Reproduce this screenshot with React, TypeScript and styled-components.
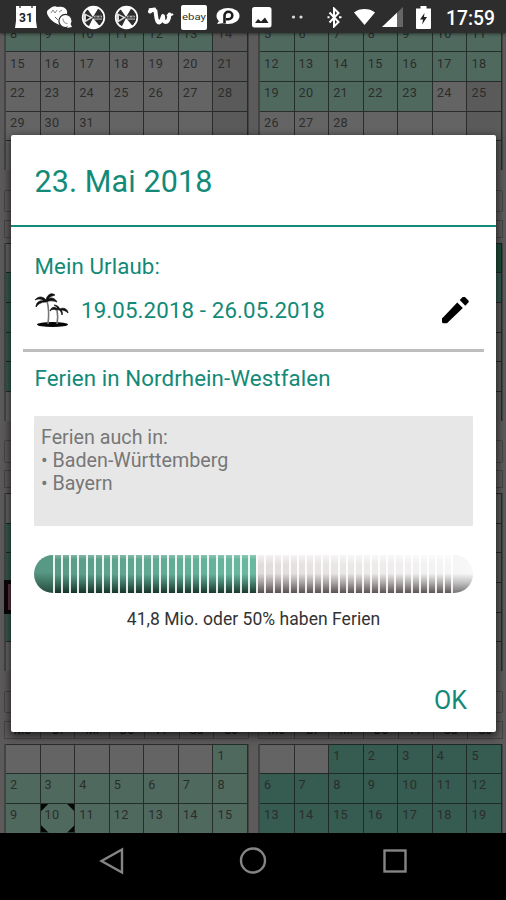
import React from 'react';
import styled, { createGlobalStyle, css } from 'styled-components';

const Global = createGlobalStyle`
  * { box-sizing: border-box; }
  body { margin: 0; background: #000; font-family: Roboto, "Liberation Sans", sans-serif; }
`;

const Screen = styled.div`
  position: relative;
  width: 506px;
  height: 900px;
  display: flex;
  flex-direction: column;
  overflow: hidden;
  background: #5c5a5b;
`;

const StatusBar = styled.header`
  flex: none;
  height: 33px;
  padding: 0 11px 0 9px;
  display: flex;
  align-items: center;
  background: #2d2d2d;
  box-shadow: 0 1px 3px rgba(0, 0, 0, 0.5);
  z-index: 1;
`;

const StatusIcon = styled.span<{ $w: number }>`
  flex: none;
  width: ${(p) => p.$w}px;
  display: flex;
  justify-content: center;
  padding-top: 1px;
  svg { display: block; }
`;

const Clock = styled.time`
  margin-left: auto;
  color: #fff;
  font-size: 19.3px;
  font-weight: 500;
  line-height: 33px;
  padding-top: 3px;
`;

const Calendar = styled.main`
  flex: 1;
  min-height: 0;
  overflow: hidden;
  display: flex;
  gap: 9px;
  padding: 0 4px;
`;

const MonthColumn = styled.div`
  width: 245px;
  flex: none;
  margin-top: -11.3px;
`;

const Month = styled.section`
  padding-bottom: 19.4px;
`;

const MonthTitle = styled.div`
  height: 22.5px;
  margin-bottom: 7.7px;
  border: 1px solid #454545;
  border-radius: 2px;
  text-align: center;
  font-size: 14px;
  line-height: 20px;
  color: #222;
`;

const DayRow = styled.div`
  display: grid;
  grid-template-columns: repeat(7, 1fr);
`;

const Weekdays = styled(DayRow)`
  height: 17.8px;
  margin-bottom: 5px;
  border: 1px solid #454545;
  font-size: 12px;
  line-height: 17px;
  text-align: center;
  color: #151515;
  span + span { border-left: 1px solid #3a3a3a; }
`;

const Days = styled(DayRow)`
  grid-auto-rows: 29.7px;
  border: solid #444;
  border-width: 0 1px 0 2px;
`;

type Tone = 'plain' | 'sunday' | 'light' | 'dark' | 'vivid' | 'selected';
const toneColor: Record<Tone, string> = {
  plain: '#656464',
  sunday: '#5b5a5a',
  light: '#50695f',
  dark: '#365b50',
  vivid: '#1f4d3a',
  selected: '#5e3347',
};

const corner = (x: string, y: string, angle: number) =>
  `linear-gradient(${angle}deg, #060808 4.8px, transparent 5.6px) ${x} ${y} / 50% 50% no-repeat`;

const Day = styled.div<{ $tone: Tone; $today?: boolean }>`
  background: ${(p) => toneColor[p.$tone]};
  border-top: 1px solid rgba(20, 24, 22, 0.72);
  border-right: 1px solid rgba(20, 24, 22, 0.72);
  padding: 3.2px 0 0 4px;
  font-size: 12.7px;
  line-height: 15px;
  letter-spacing: 0.35px;
  color: #2b2d2c;
  ${(p) =>
    p.$today &&
    css`
      background: ${corner('0', '0', 135)}, ${corner('100%', '0', 225)}, ${corner('0', '100%', 45)},
        ${corner('100%', '100%', 315)}, ${toneColor.light};
    `}
  ${(p) => p.$tone === 'selected' && 'outline: 4px solid #0b0708; outline-offset: -2px; z-index: 1;'}
`;

interface MonthData {
  name: string;
  offset: number;
  length: number;
  tone: (day: number, column: number) => Tone | null;
  today?: number;
  /** First and last (exclusive) week inside the scrolled viewport. */
  weeks?: [number, number];
}

const between = (d: number, a: number, b: number) => d >= a && d <= b;

const leftMonths: MonthData[] = [
  { name: 'Januar', offset: 0, length: 31, weeks: [1, 6], tone: (d) => (between(d, 1, 13) ? 'light' : null) },
  { name: 'März', offset: 3, length: 31, tone: (d) => (between(d, 4, 31) ? 'dark' : null) },
  {
    name: 'Mai', offset: 1, length: 31,
    tone: (d) => (d === 21 ? 'selected' : between(d, 7, 28) ? 'dark' : null),
  },
  { name: 'Juli', offset: 6, length: 31, today: 10, weeks: [0, 3], tone: () => 'light' },
];

const rightMonths: MonthData[] = [
  { name: 'Februar', offset: 3, length: 28, weeks: [1, 6], tone: (d) => (between(d, 5, 23) ? 'light' : null) },
  { name: 'April', offset: 6, length: 30, tone: (d) => (d === 1 ? 'vivid' : between(d, 2, 8) ? 'dark' : null) },
  { name: 'Juni', offset: 4, length: 30, tone: () => null },
  { name: 'August', offset: 2, length: 31, weeks: [0, 3], tone: () => 'dark' },
];

function MonthView({ data }: { data: MonthData }) {
  const [from, to] = data.weeks ?? [0, 6];
  return (
    <Month>
      {from === 0 && (
        <>
          <MonthTitle>{data.name}</MonthTitle>
          <Weekdays>
            {['Mo', 'Di', 'Mi', 'Do', 'Fr', 'Sa', 'So'].map((d) => <span key={d}>{d}</span>)}
          </Weekdays>
        </>
      )}
      <Days>
        {Array.from({ length: (to - from) * 7 }, (_, i) => {
          const day = i + from * 7 - data.offset + 1;
          const valid = day > 0 && day <= data.length;
          const tone = (valid && data.tone(day, i % 7)) || (i % 7 === 6 ? 'sunday' : 'plain');
          return <Day key={i} $tone={tone} $today={data.today === day}>{valid ? day : ''}</Day>;
        })}
      </Days>
    </Month>
  );
}

const NavBar = styled.nav`
  flex: none;
  height: 67px;
  background: #000;
  display: flex;
  justify-content: space-between;
  padding: 13px 98px 0;
`;

const Dialog = styled.div`
  position: absolute;
  left: 11px;
  top: 135px;
  width: 485px;
  height: 597px;
  background: #fff;
  border-radius: 2px;
  box-shadow: 0 3px 8px 1px rgba(0, 0, 0, 0.65);
  color: #128a77;
  display: flex;
  flex-direction: column;
  z-index: 2;
`;

const DialogTitle = styled.h1`
  margin: 0;
  height: 92px;
  flex: none;
  border-bottom: 2px solid #168877;
  padding: 28px 24px 0 23.5px;
  font-size: 30.5px;
  line-height: 38px;
  font-weight: 400;
  letter-spacing: 0.12px;
`;

const SectionTitle = styled.h2<{ $top: number }>`
  margin: ${(p) => p.$top}px 24px 0 23.5px;
  font-size: 22.3px;
  line-height: 28px;
  font-weight: 400;
  letter-spacing: 0.09px;
`;

const HolidayRow = styled.div`
  display: flex;
  align-items: center;
  height: 40px;
  margin: 10px 27px 0 23px;
`;

const HolidayRange = styled.span`
  margin-left: 12px;
  flex: 1;
  font-size: 22.3px;
  letter-spacing: 0.12px;
`;

const Divider = styled.hr`
  width: 461px;
  height: 3px;
  margin: 19px 0 0 12px;
  border: 0;
  background: #bdbdbd;
`;

const RegionBox = styled.div`
  flex: none;
  width: 439px;
  height: 110px;
  margin: 24px 0 0 23px;
  padding: 11px 7px;
  border-radius: 1px;
  background: #e7e7e7;
  color: #777;
  font-size: 19.7px;
  line-height: 22.8px;
`;

const Gauge = styled.div`
  flex: none;
  width: 439px;
  height: 38px;
  margin: 29px 0 0 23px;
  border-radius: 19px;
  background:
    repeating-linear-gradient(90deg, rgba(255, 255, 255, 0.88) 0 2px, transparent 2px 8.13px) 19.3px 0 / 400.4px 100% no-repeat,
    linear-gradient(180deg, rgba(255, 255, 255, 0.25), transparent 12%, transparent 50%, rgba(5, 35, 25, 0.35) 72%, rgba(5, 25, 15, 0.8)) 20px 0 / 202px 100% no-repeat,
    linear-gradient(180deg, transparent 45%, rgba(5, 25, 15, 0.6)) 0 0 / 20px 100% no-repeat,
    linear-gradient(180deg, rgba(255, 255, 255, 0.65), transparent 25%, transparent 48%, rgba(60, 50, 50, 0.35) 72%, rgba(45, 35, 35, 0.76)) 222px 0 / 197px 100% no-repeat,
    linear-gradient(180deg, transparent 48%, rgba(80, 76, 76, 0.3) 72%, rgba(75, 72, 72, 0.75)) 419px 0 / 20px 100% no-repeat,
    linear-gradient(90deg, #579783, #69b9a0 222px, #e0dbda 222px, #f8f8f8);
`;

const GaugeLabel = styled.p`
  margin: 14px 0 0;
  text-align: center;
  color: #333;
  font-size: 17.5px;
  line-height: 24px;
  letter-spacing: 0.04px;
`;

const Actions = styled.footer`
  margin-top: auto;
  display: flex;
  justify-content: flex-end;
  padding: 0 29px 15.5px;
`;

const OkButton = styled.button`
  border: 0;
  padding: 0;
  background: none;
  color: #128a77;
  font: 400 25px/32px Roboto, sans-serif;
`;

const SmileyDisc = () => (
  <svg width="25" height="25" viewBox="0 0 25 25">
    <circle cx="12.5" cy="12.5" r="10.8" fill="#2d2d2d" stroke="#fff" strokeWidth="1.7" />
    <path d="M12 12 6 3.5A11 11 0 0 1 17.5 3ZM12 13 19 21.5A11 11 0 0 1 7.5 22Z" fill="#fff" />
    <path d="M2 7.5 12 12.5 3 18Z" fill="#ddd" />
    <path d="M5 10.5 9 12.5 5 15Z" fill="#222" />
    <path d="M13 10.7h8v4h-8z" fill="#aaa" />
    <path d="M14 14v-2h2v2M18 14v-2h2v2" stroke="#333" fill="none" />
  </svg>
);

const StatusIcons = () => (
  <>
    <StatusIcon $w={33.7}>
      <svg width="22" height="24" viewBox="0 0 22 24">
        <path d="M1 1h20v15l1 7H0l1-7Z" fill="#fff" />
        <path d="M5 1v2M17 1v2" stroke="#777" strokeWidth="2" />
        <text x="11" y="17" textAnchor="middle" fontSize="12" fontWeight="700" fontFamily="Roboto" fill="#222">31</text>
      </svg>
    </StatusIcon>
    <StatusIcon $w={33.7}>
      <svg width="26" height="23" viewBox="0 0 26 23">
        <path d="M5 1c2-1 4-1 5 0 4-1 9 0 10 4 1 5-3 8-7 11l1 3C5 18-3 7 1 4Z" fill="#fff" />
        <path d="m4 7 2-3 2 3 2-3M12 6l3-2" stroke="#888" fill="none" strokeWidth="1" />
        <path d="m8 11 3 3" stroke="#666" fill="none" strokeWidth="1" />
        <circle cx="18.5" cy="15" r="6.6" fill="#fff" stroke="#2d2d2d" strokeWidth="1.2" />
        <path d="M20 22l5-1-2-4" fill="#fff" />
        <path d="M16 12.5c0 3 2 5 4.5 5" stroke="#999" fill="none" strokeWidth="1.1" />
      </svg>
    </StatusIcon>
    <StatusIcon $w={33.7}><SmileyDisc /></StatusIcon>
    <StatusIcon $w={33.7}><SmileyDisc /></StatusIcon>
    <StatusIcon $w={33.7}>
      <svg width="26" height="20" viewBox="0 0 26 20">
        <path d="M2 4.5c2-2 4-2 5.5-.5.5 4 .5 7 2 10.5 2 3 4-1 5.5-5.5.5 3 0 6 2.5 6 2 0 3.5-2.5 4-7.5" fill="none" stroke="#fff" strokeWidth="3.9" strokeLinecap="round" strokeLinejoin="round" />
        <path d="M1.5 2.2 7 1.5M19.5 8.5l5-1" stroke="#fff" strokeWidth="1.8" strokeLinecap="round" />
      </svg>
    </StatusIcon>
    <StatusIcon $w={33.7}>
      <svg width="26" height="27" viewBox="0 0 26 27">
        <rect y="1" width="26" height="25" rx="2" fill="#fff" />
        <text x="13" y="15.5" textAnchor="middle" fontSize="9.5" textLength="24" lengthAdjust="spacingAndGlyphs" fontFamily="Roboto" fill="#333">ebay</text>
      </svg>
    </StatusIcon>
    <StatusIcon $w={33.7}>
      <svg width="24" height="20" viewBox="0 0 24 20">
        <ellipse cx="12" cy="9" rx="11.5" ry="8" fill="#fff" />
        <path d="M3 14 1 17l7-1" fill="#fff" />
        <path d="M8.5 16.5V8.5a3.9 3.7 0 1 1 3.9 3.7H10" fill="none" stroke="#1d1d1d" strokeWidth="2.6" />
      </svg>
    </StatusIcon>
    <StatusIcon $w={33.7}>
      <svg width="20" height="21" viewBox="0 0 20 21">
        <rect width="19.5" height="20.5" rx="2.5" fill="#fff" />
        <path d="m3 16 3-4 3 2.5 4-4 3.5 5.5Z" fill="#222" />
      </svg>
    </StatusIcon>
    <StatusIcon $w={37}>
      <svg width="13" height="4" viewBox="0 0 13 4">
        <circle cx="2.5" cy="2" r="1.6" fill="#ddd" /><circle cx="10" cy="2" r="1.6" fill="#ddd" />
      </svg>
    </StatusIcon>
    <StatusIcon $w={38}>
      <svg width="15" height="21" viewBox="0 0 15 21">
        <path d="m2.5 5.5 9 9.5-4.5 4.5v-18L11.5 6l-9 9.5" fill="none" stroke="#fff" strokeWidth="2" />
        <path d="M.5 10.3h2M12 10.3h2.5" stroke="#fff" strokeWidth="2" />
      </svg>
    </StatusIcon>
    <StatusIcon $w={21}>
      <svg width="26" height="20" viewBox="0 0 26 20">
        <path d="M13 20 0 4.3C7-1.4 19-1.4 26 4.3Z" fill="#fff" />
      </svg>
    </StatusIcon>
    <StatusIcon $w={35}>
      <svg width="21" height="20" viewBox="0 0 21 20">
        <path d="M0 20 21 0v20Z" fill="#666" /><path d="M0 20 15 5.7V20Z" fill="#fff" />
      </svg>
    </StatusIcon>
    <StatusIcon $w={28}>
      <svg width="15" height="23" viewBox="0 0 15 23">
        <path d="M4.5 0h6v2.5H15V22q0 1-1 1H1q-1 0-1-1V2.5h4.5Z" fill="#fff" />
        <path d="m8.5 7-4.5 6.5h3L6.2 18.5l4.8-7.5H8Z" fill="#222" />
      </svg>
    </StatusIcon>
  </>
);

const PalmIcon = () => (
  <svg width="35" height="36" viewBox="0 0 35 36">
    <ellipse cx="18.5" cy="32.5" rx="15.5" ry="2.5" fill="#050505" />
    <path d="M13 9c2 7 2 15 1 23M23 18c1 5 1 9 0 14" fill="none" stroke="#777" strokeWidth="1.6" />
    <path d="M12 8C9 4 4 4 1 8c4-2 7-1 9 1-5-1-8 2-8 6 2-3 5-5 10-5 4-2 8-1 11 0-2-4-6-5-9-3 2-3 5-3 7-4-4-3-8 0-9 5ZM23 17c-2-3-6-2-7 2 2-2 4-2 6-1 4-1 5 1 6 5 1-2 0-4-1-5 3 0 5 1 7 3 0-4-5-6-8-4-1-2-3-4-6-4l3 2Z" fill="#101010" stroke="#101010" strokeWidth=".7" />
  </svg>
);

const PencilIcon = () => (
  <svg width="27" height="27" viewBox="3 3.5 18 18">
    <path d="M4 16.8 3 17.7V20q0 1 1 1h2.3L16.9 10.85l-3.75-3.75ZM20.6 7.1q.5-.7 0-1.3l-2.4-2.4q-.7-.5-1.3 0l-2.1 2.1 3.75 3.75Z" />
  </svg>
);

export default function App() {
  return (
    <>
      <Global />
      <Screen>
        <StatusBar>
          <StatusIcons />
          <Clock>17:59</Clock>
        </StatusBar>
        <Calendar>
          <MonthColumn>{leftMonths.map((m) => <MonthView key={m.name} data={m} />)}</MonthColumn>
          <MonthColumn>{rightMonths.map((m) => <MonthView key={m.name} data={m} />)}</MonthColumn>
        </Calendar>
        <NavBar>
          <svg width="27" height="30" viewBox="0 0 27 30"><path d="M24 3.5v23L3.5 15Z" fill="none" stroke="#858585" strokeWidth="2.4" /></svg>
          <svg width="30" height="30" viewBox="0 0 30 30"><circle cx="15" cy="14.5" r="12" fill="none" stroke="#858585" strokeWidth="2.4" /></svg>
          <svg width="27" height="30" viewBox="0 0 27 30"><rect x="3.5" y="4.5" width="21" height="21" fill="none" stroke="#858585" strokeWidth="2.4" /></svg>
        </NavBar>
        <Dialog role="dialog">
          <DialogTitle>23. Mai 2018</DialogTitle>
          <SectionTitle $top={25}>Mein Urlaub:</SectionTitle>
          <HolidayRow>
            <PalmIcon />
            <HolidayRange>19.05.2018 - 26.05.2018</HolidayRange>
            <PencilIcon />
          </HolidayRow>
          <Divider />
          <SectionTitle $top={12}>Ferien in Nordrhein-Westfalen</SectionTitle>
          <RegionBox>
            <div>Ferien auch in:</div>
            <div>• Baden-Württemberg</div>
            <div>• Bayern</div>
          </RegionBox>
          <Gauge />
          <GaugeLabel>41,8 Mio. oder 50% haben Ferien</GaugeLabel>
          <Actions><OkButton>OK</OkButton></Actions>
        </Dialog>
      </Screen>
    </>
  );
}
